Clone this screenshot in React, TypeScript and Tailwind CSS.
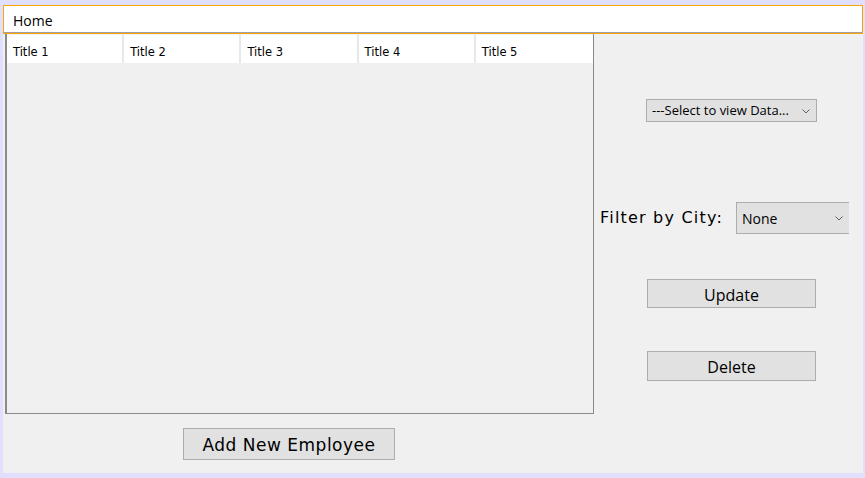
import React from "react";

const titles = ["Title 1", "Title 2", "Title 3", "Title 4", "Title 5"];

function Chevron() {
  return (
    <svg width="8" height="5" viewBox="0 0 8 5" className="shrink-0">
      <polyline points="0.5,0.5 4,4 7.5,0.5" fill="none" stroke="#606060" strokeWidth="1" />
    </svg>
  );
}

export default function App() {
  return (
    <div className="w-[865px] h-[478px] bg-[#e0e0fe] pt-[5px] pl-[3px] pr-[2px] pb-[5px]">
      <div className="w-full h-full bg-[#f0f0f0] flex flex-col">
        <div className="h-[29px] border border-[#ffa500] bg-white flex items-center pl-[9px] pt-[1px] shrink-0 relative">
          <span className="text-[14px] text-black font-['Open_Sans',sans-serif]">Home</span>
          <div className="absolute left-0 right-0 bottom-0 h-[1px] bg-[#a0a0a0]" />
        </div>
        <div className="flex flex-1">
          <div className="flex flex-col">
            <div className="ml-[2px] w-[589px] h-[380px] border-l-2 border-r border-b border-[#8a8a8a] border-t-0 pt-[1px]">
              <div className="flex h-[28px] bg-white w-[586px]">
                {titles.map((t, i) => (
                  <div
                    key={t}
                    className={`w-[117.5px] flex items-center pl-[6px] pt-[7px] text-[11.5px] text-black font-['DejaVu_Sans',sans-serif] ${
                      i < 4 ? "border-r-2 border-[#e8e8e8]" : ""
                    }`}
                  >
                    {t}
                  </div>
                ))}
              </div>
            </div>
            <button className="mt-[14px] ml-[180px] w-[212px] h-[32px] bg-[#e1e1e1] border border-[#adadad] pt-[3px] text-[17px] tracking-[0.5px] text-black font-['DejaVu_Sans',sans-serif] flex items-center justify-center">
              Add New Employee
            </button>
          </div>
          <div className="flex flex-col flex-1 pl-[6px]">
            <div className="mt-[65px] ml-[46px] w-[171px] h-[23px] bg-[#e1e1e1] border border-[#adadad] flex items-center justify-between pl-[5px] pr-[6px] pt-[1px]">
              <span className="text-[13px] text-black font-['Open_Sans',sans-serif]">---Select to view Data...</span>
              <Chevron />
            </div>
            <div className="mt-[80px] flex items-center">
              <span className="text-[16px] tracking-[1.2px] text-black font-['DejaVu_Sans',sans-serif]">Filter by City:</span>
              <div className="ml-[13px] w-[113px] h-[32px] bg-[#e1e1e1] border border-[#adadad] border-r-0 flex items-center justify-between pl-[5px] pr-[6px]">
                <span className="text-[14px] text-black font-['Open_Sans',sans-serif]">None</span>
                <Chevron />
              </div>
            </div>
            <button className="mt-[45px] ml-[47px] w-[169px] h-[29px] bg-[#e1e1e1] border border-[#adadad] text-[16px] pt-[2px] text-black font-['Open_Sans',sans-serif] flex items-center justify-center">
              Update
            </button>
            <button className="mt-[43px] ml-[47px] w-[169px] h-[30px] bg-[#e1e1e1] border border-[#adadad] text-[16px] pt-[2px] text-black font-['Open_Sans',sans-serif] flex items-center justify-center">
              Delete
            </button>
          </div>
        </div>
      </div>
    </div>
  );
}
